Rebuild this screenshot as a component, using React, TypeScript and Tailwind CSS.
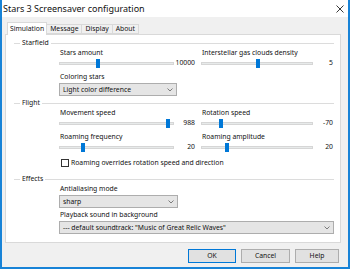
import * as React from "react";

type SliderProps = { label: string; value: string; pos: number; trackW: number };

function Slider({ label, value, pos, trackW }: SliderProps) {
  return (
    <div className="flex flex-col">
      <div className="h-[10px] leading-[10px] pl-[1px] whitespace-nowrap">{label}</div>
      <div className="flex h-[10px] items-center">
        <div className="relative h-[3px] border border-[#d6d6d6] bg-[#e7eaea]" style={{ width: trackW }}>
          <div className="absolute top-[-4px] h-[9px] w-[4px] bg-[#0078d7]" style={{ left: pos }} />
        </div>
        <div className="flex-1 text-right leading-[10px]">{value}</div>
      </div>
    </div>
  );
}

function Group({ title }: { title: string }) {
  return (
    <div className="flex h-[10px] items-center pl-[8px] pr-[6px]">
      <div className="h-px w-[6px] bg-[#dcdcdc]" />
      <span className="px-[2px] leading-[10px]">{title}</span>
      <div className="h-px flex-1 bg-[#dcdcdc]" />
    </div>
  );
}

function Combo({ text, w }: { text: string; w: string }) {
  return (
    <div className={`flex h-[13px] items-center justify-between border border-[#adadad] bg-[#e5e5e5] pl-[3px] pr-[3px] ${w}`}>
      <span className="leading-[11px] whitespace-nowrap">{text}</span>
      <svg width="6" height="4" viewBox="0 0 6 4" className="shrink-0">
        <path d="M0.5 0.5 L3 3 L5.5 0.5" fill="none" stroke="#606060" strokeWidth="0.8" />
      </svg>
    </div>
  );
}

export default function App() {
  return (
    <div className="flex h-[269px] w-[350px] flex-col border-x-2 border-b-2 border-[#1883d7] bg-[#f0f0f0] font-['Noto_Sans',sans-serif] text-[6.8px] text-[#111]">
      {/* title bar */}
      <div className="flex h-[17px] items-center justify-between bg-white pl-[1px] pr-[4px]">
        <span className="text-[9px] leading-[17px]">Stars 3 Screensaver configuration</span>
        <svg width="8" height="8" viewBox="0 0 8 8">
          <path d="M0.5 0.5 L7.5 7.5 M7.5 0.5 L0.5 7.5" stroke="#222" strokeWidth="0.9" />
        </svg>
      </div>

      <div className="flex flex-1 flex-col px-[3px] pt-[5px]">
        {/* tabs */}
        <div className="flex h-[12px] items-end pl-[2px]">
          <div className="relative z-10 -mb-px flex h-[13px] items-center border border-b-0 border-[#d9d9d9] bg-white px-[2px]">
            Simulation
          </div>
          <div className="flex h-[10px] items-center border-y border-r border-[#d9d9d9] bg-[#f0f0f0] px-[3px]">Message</div>
          <div className="flex h-[10px] items-center border-y border-r border-[#d9d9d9] bg-[#f0f0f0] px-[3px]">Display</div>
          <div className="flex h-[10px] items-center border-y border-r border-[#d9d9d9] bg-[#f0f0f0] px-[3px]">About</div>
        </div>

        {/* panel */}
        <div className="flex h-[209px] w-[336px] flex-col border border-[#d9d9d9] bg-white pt-[3px]">
          <Group title="Starfield" />
          <div className="grid grid-cols-[136px_132px] gap-x-[6px] pl-[53px]">
            <Slider label="Stars amount" value="10000" pos={36} trackW={115} />
            <Slider label="Interstellar gas clouds density" value="5" pos={54} trackW={112} />
          </div>
          <div className="mt-[4px] h-[10px] pl-[54px] leading-[10px]">Coloring stars</div>
          <div className="mt-px pl-[53px]">
            <Combo text="Light color difference" w="w-[118px]" />
          </div>

          <div className="mt-[2px]">
            <Group title="Flight" />
          </div>
          <div className="grid grid-cols-[136px_132px] gap-x-[6px] gap-y-[4px] pl-[53px]">
            <Slider label="Movement speed" value="988" pos={106} trackW={115} />
            <Slider label="Rotation speed" value="-70" pos={17} trackW={112} />
            <Slider label="Roaming frequency" value="20" pos={21} trackW={115} />
            <Slider label="Roaming amplitude" value="20" pos={23} trackW={112} />
          </div>
          <div className="mt-[6px] flex h-[10px] items-center pl-[55px]">
            <div className="h-[8px] w-[8px] border border-[#333] bg-white" />
            <span className="pl-[2px] leading-[10px]">Roaming overrides rotation speed and direction</span>
          </div>

          <div className="mt-[6px]">
            <Group title="Effects" />
          </div>
          <div className="h-[9px] pl-[54px] leading-[9px]">Antialiasing mode</div>
          <div className="mt-[2px] pl-[53px]">
            <Combo text="sharp" w="w-[119px]" />
          </div>
          <div className="mt-[2px] h-[10px] pl-[54px] leading-[10px]">Playback sound in background</div>
          <div className="mt-px pl-[53px]">
            <Combo text={'--- default soundtrack: "Music of Great Relic Waves"'} w="w-[275px]" />
          </div>
        </div>

        {/* buttons */}
        <div className="mt-[6px] flex justify-end gap-[5px] pr-[6px]">
          <div className="flex h-[14px] w-[48px] items-center justify-center border border-[#0078d7] bg-[#e1e1e1]">OK</div>
          <div className="flex h-[14px] w-[49px] items-center justify-center border border-[#adadad] bg-[#e1e1e1]">Cancel</div>
          <div className="flex h-[14px] w-[44px] items-center justify-center border border-[#adadad] bg-[#e1e1e1]">Help</div>
        </div>
      </div>
    </div>
  );
}
